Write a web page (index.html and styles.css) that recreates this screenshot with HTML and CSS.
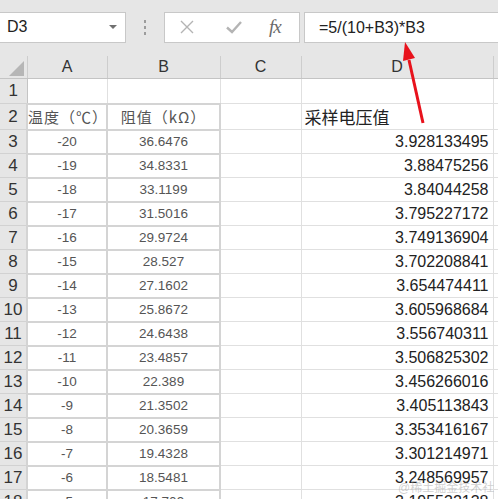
FILE: index.html
```html
<!DOCTYPE html>
<html lang="zh">
<head>
    <meta charset="UTF-8">
    <title>采样电压值</title>
    <link rel="stylesheet" href="styles.css">
</head>
<body>
    <div class="toolbar">
        <div class="namebox">
            <span>D3</span>
            <span class="caret"></span>
        </div>
        <div class="grip"><i></i><i></i><i></i></div>
        <div class="btnbox">
            <svg class="ico" width="16" height="16" viewBox="0 0 16 16"><path d="M2 2L14 14M14 2L2 14" stroke="#b4b4b4" stroke-width="1.4" fill="none"/></svg>
            <svg class="ico" width="18" height="16" viewBox="0 0 18 16"><path d="M2 8.5L7 13L16 3" stroke="#b4b4b4" stroke-width="2.4" fill="none"/></svg>
            <span class="fx">fx</span>
        </div>
        <div class="formula">=5/(10+B3)*B3</div>
    </div>

    <table class="sheet">
        <colgroup>
            <col class="c-hd"><col class="c-a"><col class="c-b"><col class="c-c"><col class="c-d"><col class="c-e">
        </colgroup>
        <thead>
            <tr>
                <th class="corner"><span class="tri"></span></th>
                <th>A</th><th>B</th><th>C</th><th>D</th><th></th>
            </tr>
        </thead>
        <tbody id="rows">
            <tr class="r1"><th>1</th><td></td><td></td><td></td><td></td><td></td></tr>
            <tr><th>2</th><td class="tb lbl">温度（℃）</td><td class="tb lbl">阻值（kΩ）</td><td></td><td class="title">采样电压值</td><td></td></tr>
        </tbody>
    </table>

    <div class="mark">@稀土掘金技术社区</div>

    <svg class="arrow" width="498" height="499" viewBox="0 0 498 499">
        <line x1="423" y1="123" x2="409" y2="60" stroke="#e8121c" stroke-width="3"/>
        <polygon points="405,42 415,58 403,61" fill="#e8121c"/>
    </svg>

    <script>
        var temps = [-20,-19,-18,-17,-16,-15,-14,-13,-12,-11,-10,-9,-8,-7,-6,-5];
        var res = ['36.6476','34.8331','33.1199','31.5016','29.9724','28.527','27.1602','25.8672',
                   '24.6438','23.4857','22.389','21.3502','20.3659','19.4328','18.5481','17.709'];
        var volts = ['3.928133495','3.88475256','3.84044258','3.795227172','3.749136904','3.702208841',
                     '3.654474411','3.605968684','3.556740311','3.506825302','3.456266016','3.405113843',
                     '3.353416167','3.301214971','3.248569957','3.195532138'];
        var body = document.getElementById('rows');
        for (var i = 0; i < temps.length; i++) {
            var tr = document.createElement('tr');
            tr.innerHTML = '<th>' + (i + 3) + '</th>' +
                '<td class="tb">' + temps[i] + '</td>' +
                '<td class="tb">' + res[i] + '</td>' +
                '<td></td>' +
                '<td class="num">' + volts[i] + '</td><td></td>';
            body.appendChild(tr);
        }
    </script>
</body>
</html>
```

FILE: styles.css
```css
html, body {
    margin: 0;
    padding: 0;
    overflow: hidden;
    background: white;
    font-family: "Liberation Sans", "Noto Sans CJK SC", sans-serif;
}
.toolbar {
    display: flex;
    align-items: center;
    height: 56px;
    background: #e6e6e6;
    box-sizing: border-box;
}
.namebox {
    display: flex;
    align-items: center;
    justify-content: space-between;
    width: 126px;
    height: 31px;
    margin-top: -2px;
    padding: 0 8px 0 7px;
    box-sizing: border-box;
    background: white;
    border: 1px solid #c8c8c8;
    border-left: none;
    font-size: 16px;
    color: #222;
}
.caret {
    width: 0;
    height: 0;
    border-left: 4px solid transparent;
    border-right: 4px solid transparent;
    border-top: 4px solid #707070;
}
.grip {
    display: flex;
    flex-direction: column;
    gap: 3px;
    width: 38px;
    align-items: center;
    margin-top: -2px;
}
.grip i {
    width: 2px;
    height: 3px;
    background: #9c9c9c;
}
.btnbox {
    display: flex;
    align-items: center;
    width: 136px;
    height: 31px;
    margin-top: -2px;
    box-sizing: border-box;
    background: white;
    border: 1px solid #c8c8c8;
}
.btnbox .ico:first-child {
    margin-left: 14px;
}
.btnbox .ico + .ico {
    margin-left: 30px;
}
.fx {
    margin-left: 26px;
    font-family: "Liberation Serif", serif;
    font-style: italic;
    font-size: 19px;
    color: #6a6a6a;
    letter-spacing: -1px;
}
.formula {
    flex: 1;
    height: 31px;
    margin-top: -2px;
    margin-left: 4px;
    padding-left: 14px;
    line-height: 29px;
    box-sizing: border-box;
    background: white;
    border: 1px solid #c8c8c8;
    border-right: none;
    font-size: 16px;
    color: #222;
}
.sheet {
    table-layout: fixed;
    border-collapse: collapse;
    width: 513px;
}
.c-hd { width: 27px; }
.c-a { width: 80px; }
.c-b { width: 113px; }
.c-c { width: 81px; }
.c-d { width: 192px; }
.c-e { width: 20px; }
.sheet th, .sheet td {
    padding: 0;
    overflow: hidden;
    white-space: nowrap;
}
thead th {
    height: 22px;
    background: #e6e6e6;
    border-left: 1px solid #cdcdcd;
    border-bottom: 1px solid #c4c4c4;
    font-weight: normal;
    font-size: 16px;
    color: #333;
    text-align: center;
}
thead th.corner {
    position: relative;
    border-left: none;
}
.tri {
    position: absolute;
    right: 3px;
    bottom: 2px;
    width: 0;
    height: 0;
    border-left: 15px solid transparent;
    border-bottom: 15px solid #b6b6b6;
}
tbody tr {
    height: 24px;
}
tbody tr.r1 {
    height: 25px;
}
tbody th {
    background: #e6e6e6;
    border-right: 1px solid #c4c4c4;
    border-bottom: 1px solid #d2d2d2;
    font-weight: normal;
    font-size: 17px;
    color: #333;
    text-align: center;
    padding-right: 5px;
    box-sizing: border-box;
}
tbody td {
    border: 1px solid #e0e0e0;
    font-size: 16px;
    color: #222;
}
td.tb {
    border: 2px solid #d4d4d4;
    text-align: center;
    font-size: 13.5px;
    color: #555;
}
td.lbl {
    font-family: "Noto Sans CJK SC", sans-serif;
    font-size: 15px;
    letter-spacing: 1px;
}
td.title {
    padding-left: 3px;
    font-size: 17px;
    color: #222;
}
td.num {
    text-align: right;
    padding-right: 4px;
}
.mark {
    position: absolute;
    left: 398px;
    top: 478px;
    font-size: 12px;
    color: rgba(150, 150, 150, 0.45);
}
.arrow {
    position: absolute;
    left: 0;
    top: 0;
    pointer-events: none;
}
```
